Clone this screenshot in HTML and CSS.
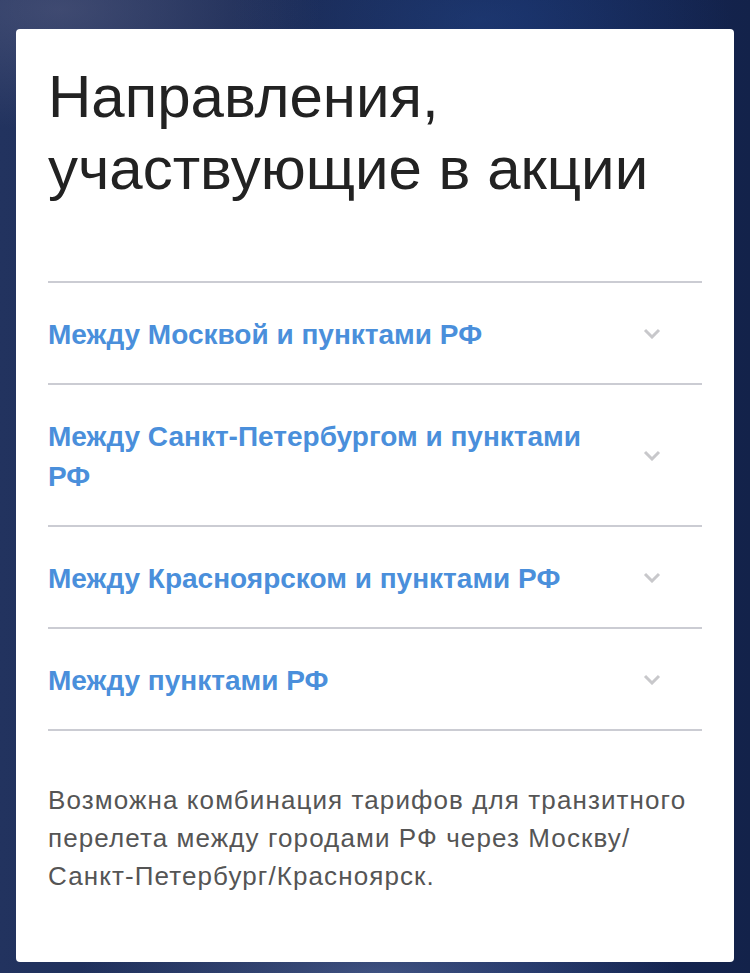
FILE: index.html
```html
<!DOCTYPE html>
<html lang="ru">
<head>
  <meta charset="UTF-8" />
  <meta name="viewport" content="width=device-width, initial-scale=1.0"/>
  <title>Направления, участвующие в акции</title>
  <link rel="stylesheet" href="styles.css">
</head>
<body>

  <div class="card">
    <h1>Направления, участвующие в акции</h1>

    <div class="list">
      <div class="item">
        <span class="item-title">Между Москвой и пунктами РФ</span>
        <span class="chevron">
          <svg width="18" height="11" viewBox="0 0 18 11"><polyline points="2,2 9,9 16,2" /></svg>
        </span>
      </div>
      <div class="item">
        <span class="item-title">Между Санкт-Петербургом и пунктами РФ</span>
        <span class="chevron">
          <svg width="18" height="11" viewBox="0 0 18 11"><polyline points="2,2 9,9 16,2" /></svg>
        </span>
      </div>
      <div class="item">
        <span class="item-title">Между Красноярском и пунктами РФ</span>
        <span class="chevron">
          <svg width="18" height="11" viewBox="0 0 18 11"><polyline points="2,2 9,9 16,2" /></svg>
        </span>
      </div>
      <div class="item">
        <span class="item-title">Между пунктами РФ</span>
        <span class="chevron">
          <svg width="18" height="11" viewBox="0 0 18 11"><polyline points="2,2 9,9 16,2" /></svg>
        </span>
      </div>
    </div>

    <p class="note">Возможна комбинация тарифов для транзитного перелета между городами РФ через Москву/ <span class="nowrap">Санкт-Петербург/Красноярск.</span></p>
  </div>

</body>
</html>
```

FILE: styles.css
```css
html, body {
  height: 100%;
}

body {
  margin: 0;
  padding: 29px 16px 11px;
  box-sizing: border-box;
  font-family: 'Liberation Sans', Arial, sans-serif;
  color: #222;
  background:
    radial-gradient(ellipse 260px 120px at 60px 10px, rgba(120, 120, 150, 0.35), transparent),
    radial-gradient(ellipse 300px 60px at 380px 973px, rgba(110, 130, 180, 0.45), transparent),
    radial-gradient(ellipse 250px 100px at 480px 20px, rgba(40, 80, 150, 0.35), transparent),
    linear-gradient(90deg, #22335f 0%, #1a2a55 40%, #15285a 70%, #13224a 100%);
}

.card {
  background: white;
  border-radius: 4px;
  padding: 32px 32px 67px;
}

h1 {
  margin: 0;
  font-size: 60px;
  line-height: 72px;
  font-weight: normal;
  color: #222;
}

.list {
  margin-top: 76px;
  border-bottom: 2px solid #cbccd3;
}

.item {
  display: flex;
  align-items: center;
  border-top: 2px solid #cbccd3;
  padding: 28px 0;
}

.item-title {
  flex: 1;
  margin-right: 40px;
  padding-top: 4px;
  font-size: 28px;
  line-height: 40px;
  font-weight: bold;
  color: #4a8fdb;
}

.chevron {
  width: 60px;
  display: flex;
  justify-content: flex-start;
}

.chevron svg {
  display: block;
  margin-left: 1px;
}

.chevron polyline {
  fill: none;
  stroke: #c8c8cb;
  stroke-width: 3;
}

.note {
  margin: 50px 0 0;
  font-size: 26px;
  line-height: 38px;
  letter-spacing: 1.1px;
  color: #555;
}

.nowrap {
  white-space: nowrap;
}
```
